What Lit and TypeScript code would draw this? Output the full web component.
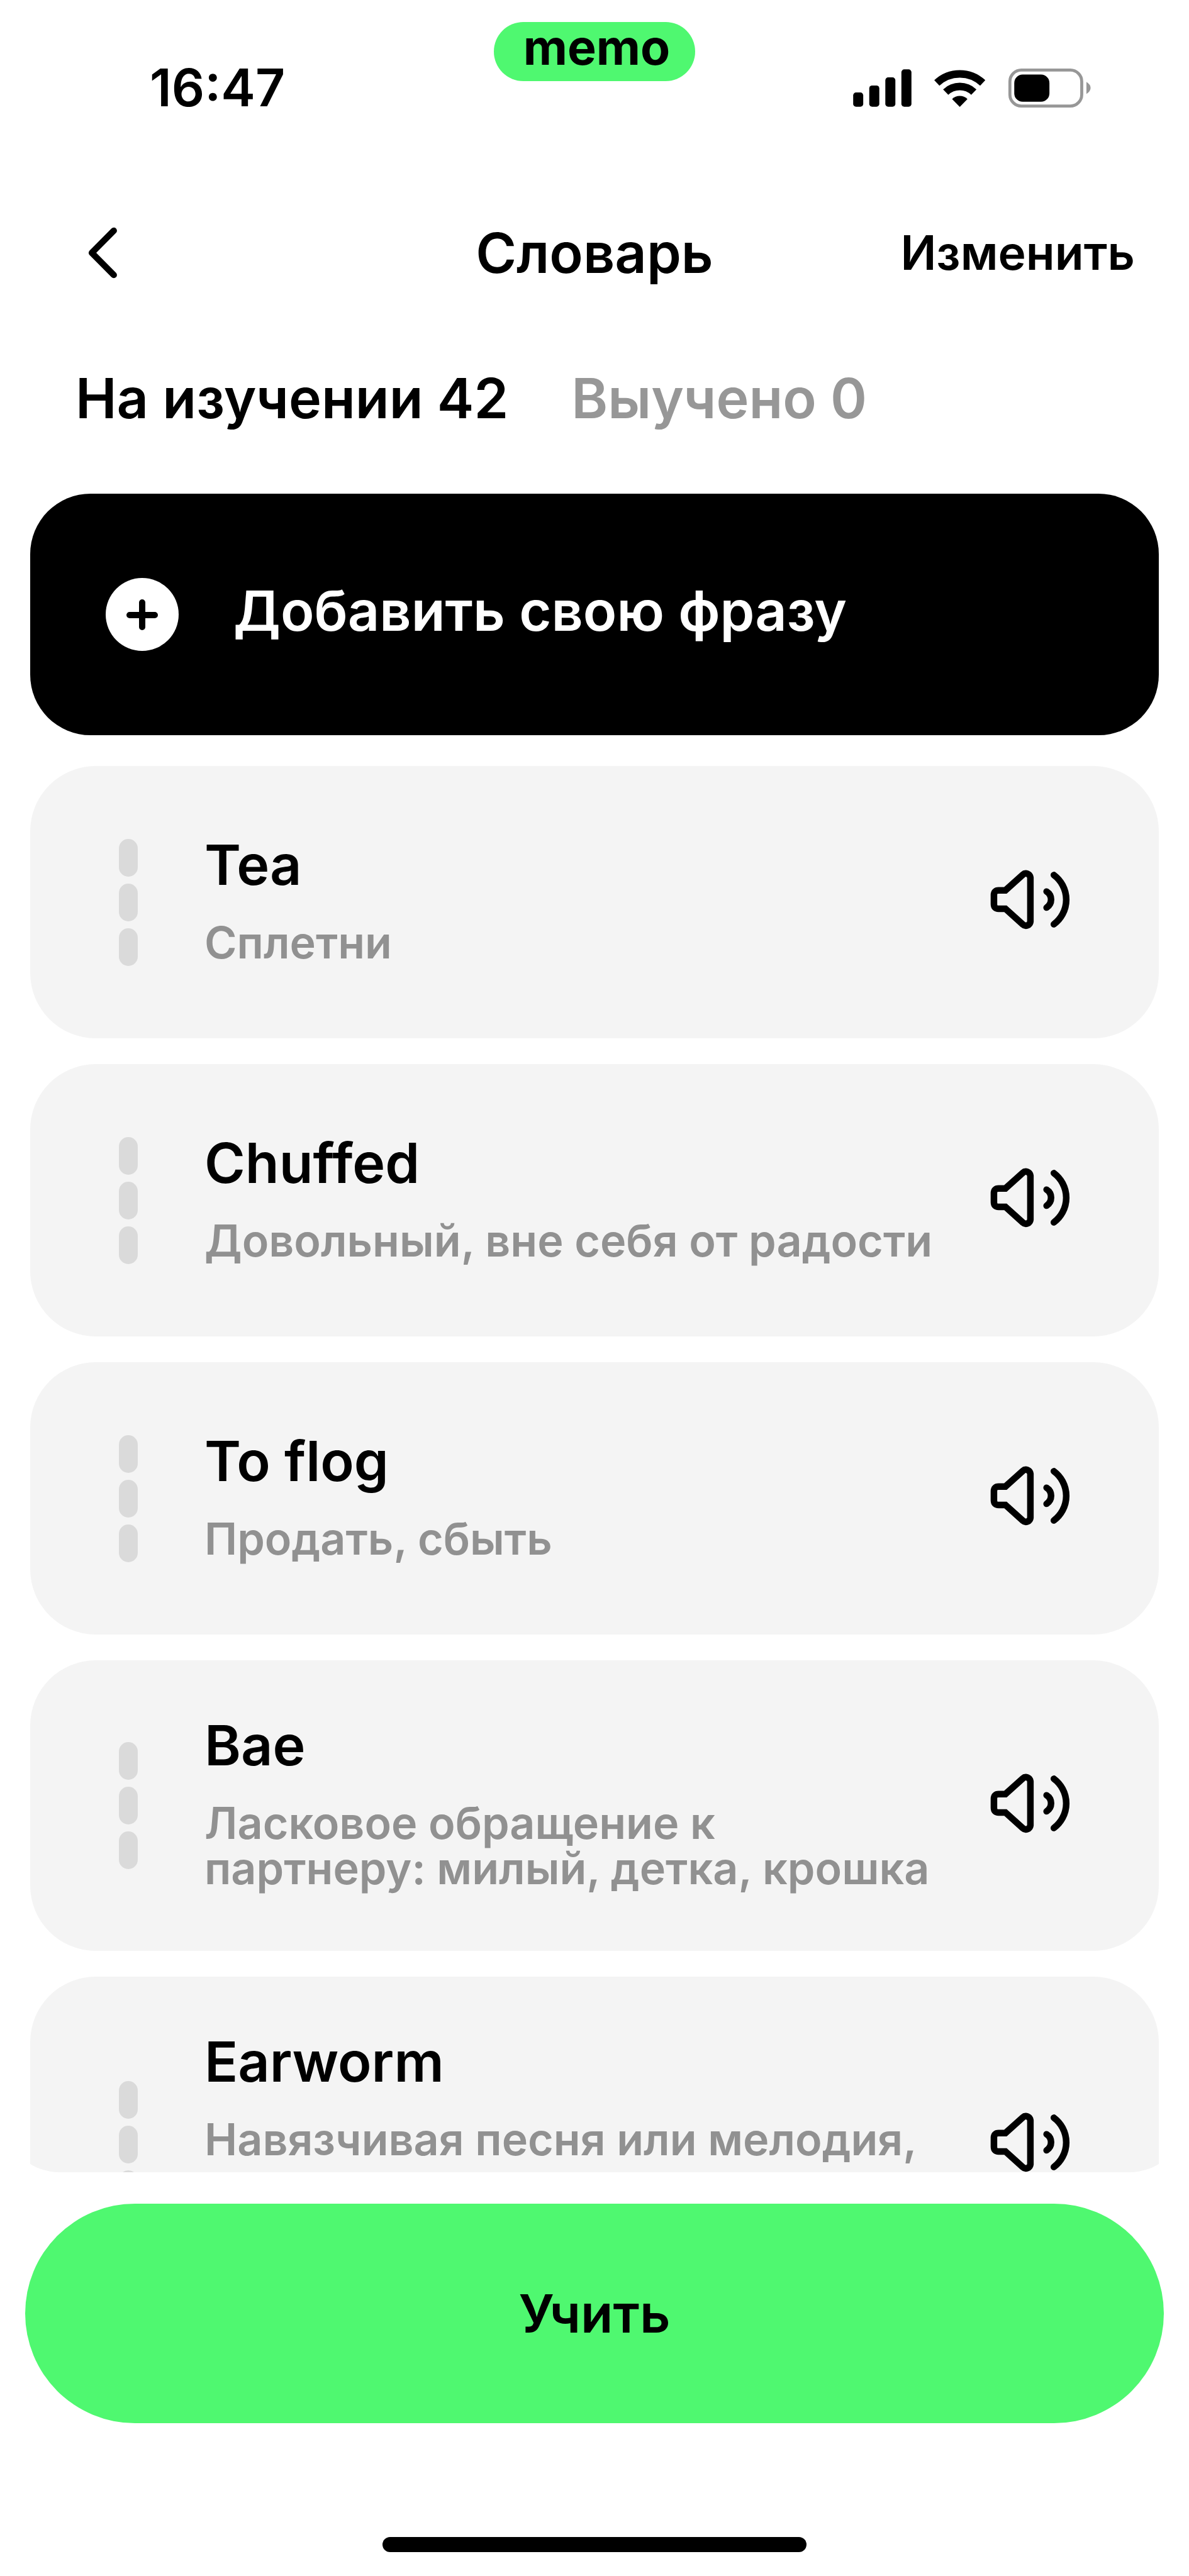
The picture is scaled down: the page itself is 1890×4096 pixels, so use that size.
import { LitElement, html, css } from "lit";
import { customElement, property, state } from "lit/decorators.js";

interface Phrase {
  term: string;
  meaning: string;
  long?: boolean;
}

const PHRASES: Phrase[] = [
  { term: "Tea", meaning: "Сплетни" },
  { term: "Chuffed", meaning: "Довольный, вне себя от радости" },
  { term: "To flog", meaning: "Продать, сбыть" },
  { term: "Bae", meaning: "Ласковое обращение к партнеру: милый, детка, крошка" },
  { term: "Earworm", meaning: "Навязчивая песня или мелодия,", long: true },
];

/** System status bar: clock, app badge, signal, Wi-Fi and battery. */
@customElement("status-bar")
export class StatusBar extends LitElement {
  static styles = css`
    :host {
      display: grid;
      grid-template-columns: 1fr auto 1fr;
      height: 154px;
      padding-top: 35px;
    }
    .clock {
      align-self: end;
      padding-left: 238px;
      font-size: 82px;
      line-height: 98px;
      font-weight: 600;
    }
    .badge {
      align-self: start;
      box-sizing: border-box;
      height: 94px;
      padding: 0 40px 0 47px;
      border-radius: 47px;
      background: #4ff870;
      font-size: 77px;
      line-height: 80px;
      font-weight: 700;
    }
    .icons {
      align-self: end;
      justify-self: end;
      display: flex;
      align-items: center;
      gap: 36px;
      height: 98px;
      padding-right: 156px;
    }
    .icon {
      display: block;
      height: 62px;
    }
    .signal {
      width: 93px;
    }
    .wifi {
      width: 81px;
    }
    .battery {
      width: 132px;
    }
  `;

  render() {
    return html`
      <time class="clock">16:47</time>
      <span class="badge">memo</span>
      <div class="icons">
        <svg class="icon signal" viewBox="53 195 348 233" role="img" aria-label="Сигнал">
          <rect x="53" y="338" width="60" height="85" rx="17" />
          <rect x="149" y="296" width="60" height="127" rx="17" />
          <rect x="245" y="248" width="60" height="175" rx="17" />
          <rect x="341" y="200" width="60" height="223" rx="17" />
        </svg>
        <svg class="icon wifi" viewBox="533 195 303 233" role="img" aria-label="Wi-Fi">
          <g fill="none" stroke="#000" stroke-width="45">
            <path d="M548 281 A200 200 0 0 1 822 281" />
            <path d="M601 336 A122 122 0 0 1 769 336" />
          </g>
          <path d="M639 377 A66 66 0 0 1 731 377 L685 424 Z" />
        </svg>
        <svg class="icon battery" viewBox="967 195 495 233" role="img" aria-label="Батарея">
          <rect x="979" y="204" width="429" height="215" rx="68" fill="none" stroke="#979797" stroke-width="18" />
          <rect x="1005" y="231" width="210" height="162" rx="50" />
          <path d="M1436 275 Q1461 290 1461 311 Q1461 332 1436 347 Z" fill="#979797" />
        </svg>
      </div>
    `;
  }
}

/** One dictionary entry with its progress marks and a listen button. */
@customElement("phrase-card")
export class PhraseCard extends LitElement {
  @property() term = "";
  @property() meaning = "";
  @property({ type: Boolean }) long = false;

  static styles = css`
    :host {
      display: flex;
      align-items: center;
      flex: none;
      box-sizing: border-box;
      min-height: 433px;
      padding: 0 122px 0 141px;
      border-radius: 104px;
      background: #f4f4f4;
    }
    .progress {
      display: grid;
      gap: 11px;
      flex: none;
    }
    .mark {
      width: 30px;
      height: 60px;
      border-radius: 15px;
      background: #dadada;
    }
    .text {
      flex: 1;
      min-width: 0;
      padding: 82px 66px 95px 106px;
    }
    .term {
      margin: 0 0 35px;
      font-size: 88px;
      line-height: 106px;
      font-weight: 600;
    }
    .meaning {
      margin: 0;
      color: #919191;
      font-size: 70px;
      line-height: 72px;
      font-weight: 600;
    }
    /* Room for three lines of text. */
    .meaning.long {
      min-height: 216px;
    }
    .listen {
      flex: none;
      margin: 0;
      padding: 0 0 8px;
      border: 0;
      background: none;
      cursor: pointer;
    }
    .speaker {
      display: block;
      width: 161px;
      height: 161px;
    }
  `;

  render() {
    return html`
      <div class="progress">
        <span class="mark"></span>
        <span class="mark"></span>
        <span class="mark"></span>
      </div>
      <div class="text">
        <h2 class="term">${this.term}</h2>
        <p class="meaning ${this.long ? "long" : ""}">${this.meaning}</p>
      </div>
      <button class="listen" type="button" aria-label="Прослушать: ${this.term}">
        <svg class="speaker" viewBox="0 0 600 600" fill="none" stroke="#000" stroke-width="39">
          <path d="M146 245 H106 Q78 245 78 273 V326 Q78 354 106 354 H146 L249 447 A27 27 0 0 0 294 430 V169 A27 27 0 0 0 249 152 Z" />
          <path d="M390 252 A56 56 0 0 1 390 347" stroke-linecap="round" />
          <path d="M433 154 A182 182 0 0 1 433 446" stroke-linecap="round" />
        </svg>
      </button>
    `;
  }
}

@customElement("app-root")
export class AppRoot extends LitElement {
  @state() private tab: "learning" | "learned" = "learning";

  static styles = css`
    :host {
      display: flex;
      flex-direction: column;
      height: 100vh;
      overflow: hidden;
      background: #fff;
      color: #000;
      font-family: Inter, "Liberation Sans", sans-serif;
    }
    button {
      margin: 0;
      padding: 0;
      border: 0;
      background: none;
      color: inherit;
      font: inherit;
      cursor: pointer;
    }
    .nav {
      display: grid;
      grid-template-columns: 1fr auto 1fr;
      align-items: center;
      padding-top: 160px;
    }
    .nav .back {
      justify-self: start;
      padding-left: 139px;
    }
    .chevron {
      display: block;
      width: 48px;
      height: 86px;
    }
    .title {
      margin: 0;
      font-size: 88px;
      line-height: 106px;
      font-weight: 600;
    }
    .nav .edit {
      justify-self: end;
      padding-right: 86px;
      font-size: 75px;
      line-height: 88px;
      font-weight: 600;
    }
    .tabs {
      display: flex;
      gap: 100px;
      padding: 125px 120px 99px;
    }
    .tabs .tab {
      color: #979797;
      font-size: 88px;
      line-height: 106px;
      font-weight: 600;
    }
    .tabs .active {
      color: #000;
    }
    button.add {
      display: flex;
      align-items: center;
      gap: 87px;
      flex: none;
      min-height: 384px;
      margin: 0 48px 49px;
      padding: 0 120px;
      border-radius: 96px;
      background: #000;
      color: #fff;
      text-align: left;
    }
    .plus {
      width: 116px;
      height: 116px;
    }
    .add-label {
      padding-bottom: 12px;
      font-size: 88px;
      line-height: 106px;
      font-weight: 600;
    }
    .list {
      display: flex;
      flex-direction: column;
      gap: 41px;
      flex: 1;
      min-height: 0;
      padding: 0 48px;
      border-radius: 0 0 96px 96px;
      overflow: hidden;
    }
    .footer {
      display: flex;
      flex-direction: column;
      align-items: center;
      padding: 50px 40px 38px;
    }
    .footer .learn {
      width: 100%;
      min-height: 349px;
      margin-bottom: 181px;
      border-radius: 175px;
      background: #4ff870;
      font-size: 84px;
      font-weight: 600;
    }
    .home {
      width: 674px;
      height: 24px;
      border-radius: 12px;
      background: #000;
    }
  `;

  render() {
    return html`
      <status-bar></status-bar>
      <header class="nav">
        <button class="back" type="button" aria-label="Назад">
          <svg class="chevron" viewBox="100 110 180 320">
            <path d="M257 138 L126 270 L257 402" fill="none" stroke="#000" stroke-width="38" stroke-linecap="round" stroke-linejoin="round" />
          </svg>
        </button>
        <h1 class="title">Словарь</h1>
        <button class="edit" type="button">Изменить</button>
      </header>
      <nav class="tabs">
        <button class="tab ${this.tab === "learning" ? "active" : ""}" type="button" @click=${() => (this.tab = "learning")}>На изучении 42</button>
        <button class="tab ${this.tab === "learned" ? "active" : ""}" type="button" @click=${() => (this.tab = "learned")}>Выучено 0</button>
      </nav>
      <button class="add" type="button">
        <svg class="plus" viewBox="0 0 116 116">
          <circle cx="58" cy="58" r="58" fill="#fff" />
          <path d="M58 39 V78 M38 59 H78" stroke="#000" stroke-width="10" stroke-linecap="round" />
        </svg>
        <span class="add-label">Добавить свою фразу</span>
      </button>
      <main class="list">
        ${PHRASES.map(
          (p) => html`<phrase-card .term=${p.term} .meaning=${p.meaning} .long=${p.long ?? false}></phrase-card>`
        )}
      </main>
      <footer class="footer">
        <button class="learn" type="button">Учить</button>
        <div class="home"></div>
      </footer>
    `;
  }
}
